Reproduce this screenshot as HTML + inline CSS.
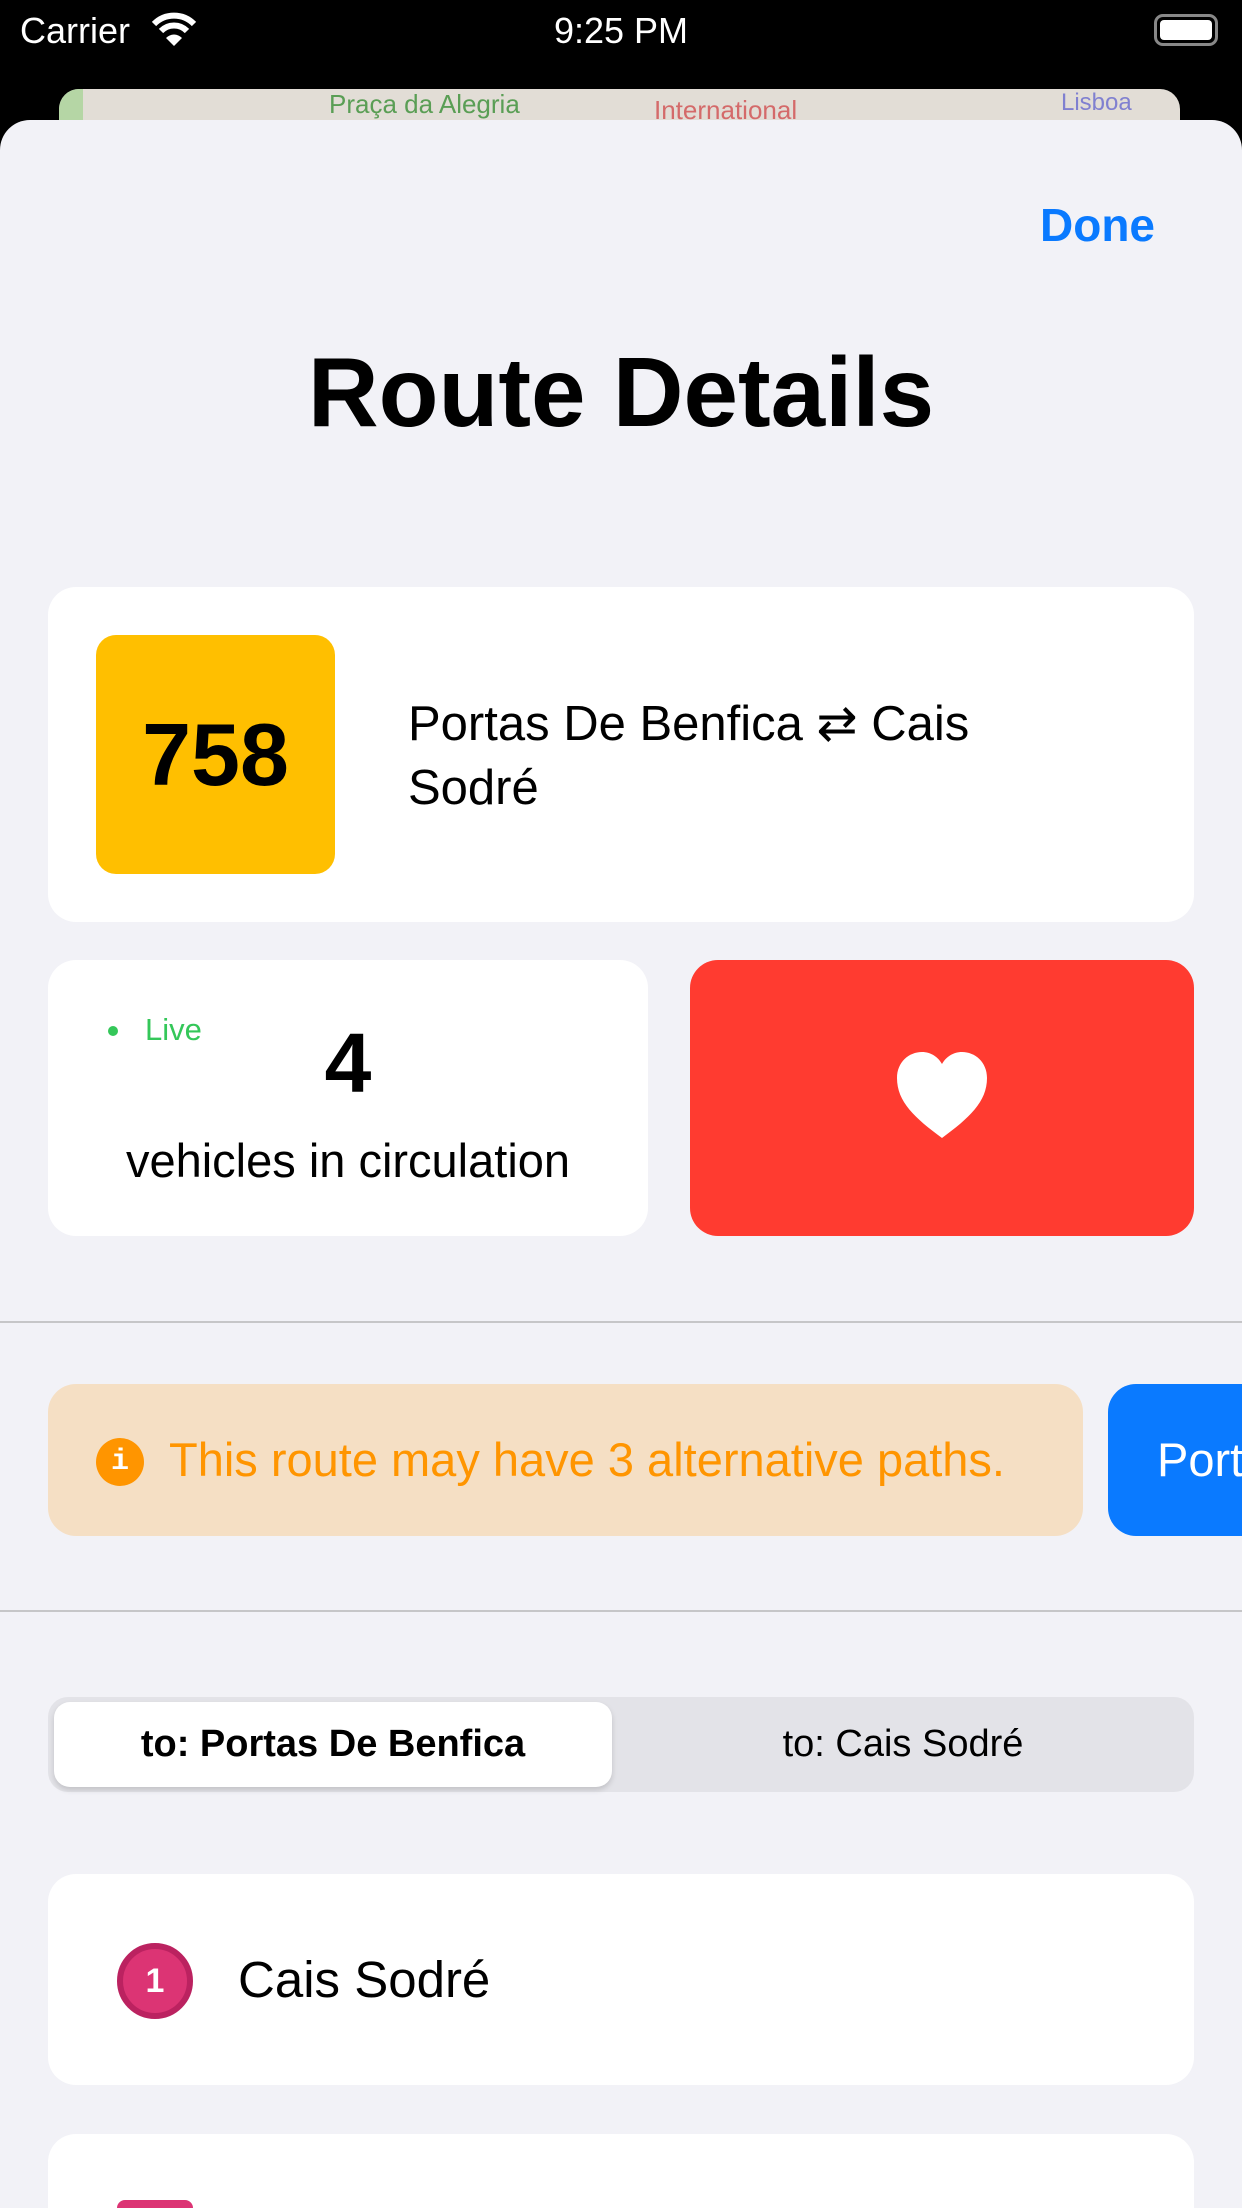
<!DOCTYPE html>
<html style="width:1242px;height:2208px;overflow:hidden"><head><meta charset="utf-8"><style>
*{margin:0;padding:0;box-sizing:border-box}
body{width:1242px;height:2208px;background:#000;position:relative;overflow:hidden;font-family:"Liberation Sans",sans-serif}
.a{position:absolute}
.sheet{left:0;top:120px;width:1242px;height:2088px;background:#f2f2f7;border-radius:30px 30px 0 0}
.card{background:#fff;border-radius:28px}
</style></head><body>
<div class="a" style="left:20px;top:10px;color:#fff;font-size:36px">Carrier</div>
<svg class="a" style="left:150px;top:12px" width="48" height="36" viewBox="0 0 48 36"><path d="M4 12 A28 28 0 0 1 44 12" stroke="#fff" stroke-width="6" fill="none"/><path d="M11 19 A18 18 0 0 1 37 19" stroke="#fff" stroke-width="6" fill="none"/><path d="M24 34 L16 26 A11 11 0 0 1 32 26 Z" fill="#fff"/></svg>
<div class="a" style="left:0;width:1242px;top:10px;text-align:center;color:#fff;font-size:36px">9:25 PM</div>
<div class="a" style="left:1154px;top:14px;width:64px;height:32px;border:3px solid #888;border-radius:9px"><div style="margin:3px;height:20px;background:#fff;border-radius:4px"></div></div>
<div class="a" style="left:59px;top:89px;width:1121px;height:60px;background:#e2ddd6;border-radius:20px 20px 0 0;overflow:hidden">
<div class="a" style="left:270px;top:0;color:#5a9e55;font-size:26px">Praça da Alegria</div>
<div class="a" style="left:595px;top:6px;color:#d46a6a;font-size:26px">International</div>
<div class="a" style="left:1002px;top:0;color:#8080d0;font-size:24px">Lisboa</div>
<div class="a" style="left:0;top:0;width:24px;height:40px;background:#b5d6a5"></div>
</div>
<div class="a sheet"></div>
<div class="a" style="left:1040px;top:198px;color:#0a7aff;font-size:46px;font-weight:bold">Done</div>
<div class="a" style="left:0;width:1242px;top:336px;text-align:center;font-size:98px;font-weight:bold;color:#000">Route Details</div>
<div class="a card" style="left:48px;top:587px;width:1146px;height:335px"></div>
<div class="a" style="left:96px;top:635px;width:239px;height:239px;background:#ffbf00;border-radius:20px;text-align:center;line-height:239px;font-size:88px;font-weight:bold">758</div>
<div class="a" style="left:408px;top:692px;font-size:49px;line-height:64px;color:#000;width:640px">Portas De Benfica ⇄ Cais Sodré</div>
<div class="a card" style="left:48px;top:960px;width:600px;height:276px"></div>
<div class="a" style="left:108px;top:1026px;width:10px;height:10px;border-radius:50%;background:#34c759"></div>
<div class="a" style="left:145px;top:1012px;font-size:31px;color:#34c759">Live</div>
<div class="a" style="left:248px;width:200px;top:1015px;text-align:center;font-size:84px;font-weight:bold">4</div>
<div class="a" style="left:48px;width:600px;top:1133px;text-align:center;font-size:47px">vehicles in circulation</div>
<div class="a" style="left:690px;top:960px;width:504px;height:276px;background:#ff3b30;border-radius:28px"></div>
<svg class="a" style="left:895px;top:1050px" width="94" height="90" viewBox="0 0 94 90"><path d="M47 88 C20 68 2 52 2 28 C2 12 14 2 27 2 C36 2 43 7 47 14 C51 7 58 2 67 2 C80 2 92 12 92 28 C92 52 74 68 47 88 Z" fill="#fff"/></svg>
<div class="a" style="left:0;top:1321px;width:1242px;height:2px;background:#c6c6c8"></div>
<div class="a" style="left:48px;top:1384px;width:1035px;height:152px;background:#f5dfc4;border-radius:28px"></div>
<div class="a" style="left:96px;top:1438px;width:48px;height:48px;border-radius:50%;background:#ff9500;color:#fff;text-align:center;line-height:48px;font-size:30px;font-family:'Liberation Mono',monospace;font-weight:bold">i</div>
<div class="a" style="left:169px;top:1432px;font-size:47px;color:#ff9500">This route may have 3 alternative paths.</div>
<div class="a" style="left:1108px;top:1384px;width:134px;height:152px;background:#0a7aff;border-radius:28px 0 0 28px;overflow:hidden"><div style="position:absolute;left:49px;top:48px;font-size:47px;color:#fff">Port</div></div>
<div class="a" style="left:0;top:1610px;width:1242px;height:2px;background:#c6c6c8"></div>
<div class="a" style="left:48px;top:1697px;width:1146px;height:95px;background:#e3e3e8;border-radius:20px"></div>
<div class="a" style="left:54px;top:1702px;width:558px;height:85px;background:#fff;border-radius:16px;box-shadow:0 3px 6px rgba(0,0,0,.15);text-align:center;line-height:85px;font-size:38px;font-weight:bold">to: Portas De Benfica</div>
<div class="a" style="left:612px;top:1702px;width:582px;line-height:85px;text-align:center;font-size:38px">to: Cais Sodré</div>
<div class="a card" style="left:48px;top:1874px;width:1146px;height:211px"></div>
<div class="a" style="left:117px;top:1943px;width:76px;height:76px;border-radius:50%;background:#dc3474;border:6px solid #bb2260;color:#fff;text-align:center;line-height:64px;font-size:34px;font-weight:bold">1</div>
<div class="a" style="left:238px;top:1950px;font-size:51px">Cais Sodré</div>
<div class="a card" style="left:48px;top:2134px;width:1146px;height:74px;border-radius:28px 28px 0 0"></div>
<div class="a" style="left:117px;top:2200px;width:76px;height:8px;border-radius:38px 38px 0 0;background:#dc3474"></div>
</body></html>
